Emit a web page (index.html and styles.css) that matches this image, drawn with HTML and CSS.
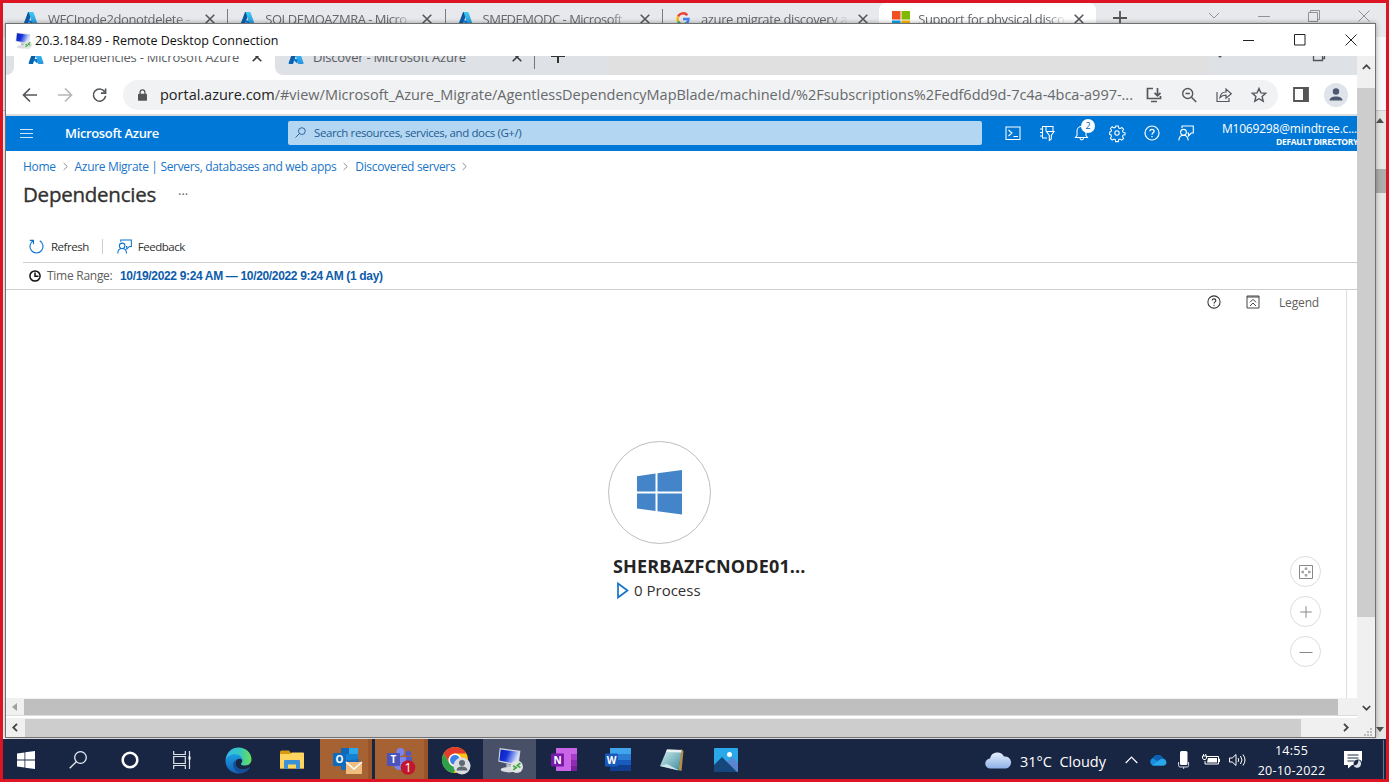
FILE: index.html
```html
<!DOCTYPE html>
<html lang="en">
<head>
<meta charset="utf-8">
<title>20.3.184.89 - Remote Desktop Connection</title>
<link rel="stylesheet" href="styles.css">
</head>
<body>
<svg class="defs" width="0" height="0">
  <defs>
    <linearGradient id="azL" x1="0" y1="0" x2="0" y2="1"><stop offset="0" stop-color="#114a8b"/><stop offset="1" stop-color="#0669bc"/></linearGradient>
    <linearGradient id="azR" x1="0" y1="0" x2="0" y2="1"><stop offset="0" stop-color="#3ccbf4"/><stop offset="1" stop-color="#2892df"/></linearGradient>
    <linearGradient id="edgeA" x1="0" y1="0" x2="1" y2="0"><stop offset="0" stop-color="#35b8f0"/><stop offset=".55" stop-color="#35c7c0"/><stop offset="1" stop-color="#6be054"/></linearGradient>
    <linearGradient id="edgeB" x1="0" y1="0" x2="0" y2="1"><stop offset="0" stop-color="#1b9de2"/><stop offset="1" stop-color="#1260b8"/></linearGradient>
    <linearGradient id="scr" x1="0" y1="0" x2="1" y2=".3"><stop offset="0" stop-color="#0a1ec0"/><stop offset=".45" stop-color="#1533d8"/><stop offset="1" stop-color="#d5e3fb"/></linearGradient>
    <linearGradient id="cloudG" x1="0" y1="0" x2="0" y2="1"><stop offset="0" stop-color="#e6f0fd"/><stop offset="1" stop-color="#8fb1e8"/></linearGradient>
    <linearGradient id="noteG" x1="0" y1="0" x2="1" y2="1"><stop offset="0" stop-color="#d8f2f3"/><stop offset="1" stop-color="#3b8b9c"/></linearGradient>
    <symbol id="azure" viewBox="0 0 16 16"><path d="M5.4 1h4.4L5 15H1.6Q.3 15 .7 13.700z" fill="url(#azL)"/><path d="M10.500 10H4.600l4.600 4.500z" fill="#0078d4"/><path d="M6 1h4.400q.7 0 1 .8l4.100 12q.3 1.200-.9 1.200h-4.300z" fill="url(#azR)"/></symbol>
    <symbol id="x" viewBox="0 0 10 10"><path d="M.7.7l8.600 8.600M9.300.7L.7 9.300" stroke="currentColor" stroke-width="1.600" fill="none"/></symbol>
    <symbol id="feedback" viewBox="0 0 16 16"><g fill="none" stroke="currentColor" stroke-width="1.100"><circle cx="5.500" cy="7.300" r="2.900"/><path d="M.8 15.500c.2-3.500 2-5.300 4.700-5.300s4.500 1.800 4.700 5.300M4 3V1h11.300v7h-2l-2.800 2.800V8H9.500"/></g></symbol>
    <symbol id="help" viewBox="0 0 16 16"><circle cx="8" cy="8" r="7" fill="none" stroke="currentColor" stroke-width="1.200"/><path d="M5.900 6.300c0-2.600 4.200-2.600 4.200 0C10.100 7.800 8 7.900 8 9.700M8 11v1.300" fill="none" stroke="currentColor" stroke-width="1.300"/></symbol>
    <symbol id="rdp" viewBox="0 0 26 26"><path d="M3.500 2l20 2.600-1.800 14.800L2.200 15z" fill="#cfd6e0"/><path d="M4.500 3.300l17.700 2.300-1.500 12L3.300 14z" fill="url(#scr)"/><path d="M10 17l6 1.300.5 3.700H10z" fill="#b8bcc4"/><ellipse cx="12.500" cy="22.800" rx="8" ry="2.600" fill="#d9dce1"/><circle cx="20" cy="20" r="6" fill="#e0e4e2"/><path d="M16.500 19l3 2-3 2M23.500 16.500l-3 2.300 3 2" stroke="#3ba53b" stroke-width="1.500" fill="none"/></symbol>
    <symbol id="sep" viewBox="0 0 6 10"><path d="M.8.800l4.300 4.200L.8 9.200" fill="none" stroke="#777" stroke-width="1"/></symbol>
  </defs>
</svg>

<main class="desktop">
  <section class="back-browser">
    <div class="back-tabs">
      <div class="btab"><svg class="az"><use href="#azure"/></svg><span class="tab-text t1">WFCInode2donotdelete - </span><svg class="tx"><use href="#x"/></svg></div>
      <div class="btab"><svg class="az"><use href="#azure"/></svg><span class="tab-text t2">SQLDEMOAZMRA - Micro</span><svg class="tx"><use href="#x"/></svg></div>
      <div class="btab"><svg class="az"><use href="#azure"/></svg><span class="tab-text t3">SMFDEMODC - Microsoft</span><svg class="tx"><use href="#x"/></svg></div>
      <div class="btab plain"><svg class="goog" viewBox="0 0 16 16"><g fill="none" stroke-width="2.800"><path d="M13 3.800A6.300 6.300 0 0 0 2.400 5.200" stroke="#ea4335"/><path d="M2.400 5.200a6.300 6.300 0 0 0 0 5.600" stroke="#fbbc05"/><path d="M2.400 10.800a6.300 6.300 0 0 0 9.800 1.800" stroke="#34a853"/><path d="M12.200 12.600A6 6 0 0 0 14.300 8H8" stroke="#4285f4"/></g></svg><span class="tab-text t4">azure migrate discovery a</span><svg class="tx"><use href="#x"/></svg></div>
      <div class="btab active"><svg class="ms" viewBox="0 0 18 18"><path fill="#f25022" d="M0 0h8.500v8.500H0z"/><path fill="#7fba00" d="M9.500 0H18v8.500H9.500z"/><path fill="#00a4ef" d="M0 9.500h8.500V18H0z"/><path fill="#ffb900" d="M9.500 9.500H18V18H9.500z"/></svg><span class="tab-text t5">Support for physical disco</span><svg class="tx"><use href="#x"/></svg></div>
      <svg class="back-plus" viewBox="0 0 14 14"><path d="M7 0v14M0 7h14" stroke="#555" stroke-width="1.800"/></svg>
      <div class="back-controls">
        <svg width="12" height="8" viewBox="0 0 12 8"><path d="M1 1l5 5 5-5" /></svg>
        <svg width="12" height="12" viewBox="0 0 12 12"><path d="M0 6.500h12"/></svg>
        <svg width="12" height="12" viewBox="0 0 12 12"><path d="M.5 2.500h9v9h-9zM2.500 2.500v-2h9v9h-2"/></svg>
        <svg width="12" height="12" viewBox="0 0 12 12"><path d="M.5.500l11 11M11.500.500l-11 11"/></svg>
      </div>
    </div>
    <div class="back-toolbar"></div>
    <div class="back-page">
      <div class="back-scroll"><svg class="up" viewBox="0 0 8 5"><path d="M0 5l4-5 4 5z"/></svg><i class="back-thumb"></i><svg class="down" viewBox="0 0 8 5"><path d="M0 0l4 5 4-5z"/></svg></div>
    </div>
  </section>

  <section class="window">
    <header class="titlebar">
      <svg class="rdp-small"><use href="#rdp"/></svg>
      <h1>20.3.184.89 - Remote Desktop Connection</h1>
      <div class="win-controls">
        <svg width="12" height="12" viewBox="0 0 12 12"><path d="M0 6.500h11"/></svg>
        <svg width="12" height="12" viewBox="0 0 12 12"><path d="M.5.500h10.500v10.500H.5z"/></svg>
        <svg width="12" height="12" viewBox="0 0 12 12"><path d="M.5.500l11 11M11.500.500l-11 11"/></svg>
      </div>
    </header>
    <div class="session">
      <div class="remote">
        <div class="rtabs">
          <div class="rtab-row">
            <span class="rtab-edge"></span>
            <div class="rtab on"><svg class="az"><use href="#azure"/></svg><span class="r1">Dependencies - Microsoft Azure</span><svg class="tx"><use href="#x"/></svg></div>
            <div class="rtab off"><svg class="az"><use href="#azure"/></svg><span class="r2">Discover - Microsoft Azure</span><svg class="tx"><use href="#x"/></svg></div>
            <div class="rnew"><svg width="14" height="14" viewBox="0 0 14 14"><path d="M7 0v14M0 7h14" stroke="#333" stroke-width="2"/></svg></div>
            <div class="rmid"></div>
            <div class="rend"><svg width="10" height="6" viewBox="0 0 10 6"><path d="M0 0l5 5 5-5"/></svg><svg width="12" height="12" viewBox="0 0 12 12"><path d="M.5 2.500h9v9h-9zM2.500 2.500v-2h9v9h-2"/></svg></div>
          </div>
        </div>
        <div class="address">
          <svg class="nav back" viewBox="0 0 16 16"><path d="M8 1.500L1.500 8 8 14.500M1.500 8H15"/></svg>
          <svg class="nav fwd" viewBox="0 0 16 16"><path d="M8 1.500L14.500 8 8 14.500M14.500 8H1"/></svg>
          <svg class="nav rel" viewBox="0 0 16 16"><path d="M13.500 4.500A6.500 6.500 0 1 0 14.500 9M14.500 1v5h-5"/></svg>
          <div class="omnibox">
            <svg class="lock" viewBox="0 0 10 13"><path d="M1 5h8q1 0 1 1v6q0 1-1 1H1q-1 0-1-1V6q0-1 1-1z" fill="#555"/><path d="M2.300 5.500V3.500a2.700 2.700 0 0 1 5.400 0v2" fill="none" stroke="#555" stroke-width="1.400"/></svg>
            <span class="url"><b>portal.azure.com</b>/#view/Microsoft_Azure_Migrate/AgentlessDependencyMapBlade/machineId/%2Fsubscriptions%2Fedf6dd9d-7c4a-4bca-a997-...</span>
            <div class="omni-icons">
              <svg viewBox="0 0 16 16"><path d="M7 1.500H1.500v10h13V9M5 14.500h6M11.500 1v7.500M8.500 5.800l3 3 3-3" stroke-width="1.700"/></svg>
              <svg viewBox="0 0 16 16"><circle cx="6.700" cy="6.500" r="5"/><path d="M4.500 6.500h4.400M10.500 10.300l4.700 4.700" stroke-width="1.600"/></svg>
              <svg viewBox="0 0 16 16"><path d="M1 5v9.500h12V11M4 10.500c.5-4 3-5.500 6-5.500V2l5.300 4.700-5.300 4.600V8.200C7.500 8.200 5.500 8.700 4 10.500z" stroke-width="1.200"/></svg>
              <svg viewBox="0 0 16 16"><path d="M8 1.500l1.900 4.400 4.800.4-3.600 3.200 1.100 4.700L8 11.700l-4.200 2.500 1.100-4.700L1.300 6.300l4.800-.4z"/></svg>
            </div>
          </div>
          <svg class="panel" viewBox="0 0 16 15"><path d="M1 1h14v13H1z" fill="none" stroke="#555" stroke-width="1.800"/><path d="M10 1h5v13h-5z" fill="#555"/></svg>
          <svg class="avatar" viewBox="0 0 24 24"><circle cx="12" cy="12" r="12" fill="#dfe3ea"/><circle cx="12" cy="8.500" r="3.200" fill="#4d5870"/><path d="M5.500 17.500c0-5.500 13-5.500 13 0z" fill="#4d5870"/></svg>
        </div>
        <div class="azure-bar">
          <svg class="burger" viewBox="0 0 13 9"><path d="M0 .5h13M0 4.500h13M0 8.500h13" stroke="#cfe6fa"/></svg>
          <strong>Microsoft Azure</strong>
          <div class="search"><svg viewBox="0 0 12 12"><circle cx="7.500" cy="4.500" r="3.700"/><path d="M4.800 7.200L.5 11.500"/></svg><span>Search resources, services, and docs (G+/)</span></div>
          <div class="az-icons">
            <svg viewBox="0 0 16 16"><path d="M1 2h14v12.500H1zM3.500 5l3.500 3-3.500 3M8.500 11.500H13"/></svg>
            <svg viewBox="0 0 16 16"><path d="M14 6V1.500H3.500V13H8M1 4h2.500M1 7.500h2.500M1 11h2.500M7 1.500V6M7.500 6.500H15l-2.700 4V14l-2 1.500v-5z"/></svg>
            <span class="bell"><svg viewBox="0 0 16 16"><path d="M1.500 12.500h12l-1.500-2V6a4.500 4.500 0 0 0-9 0v4.500zM6 13c0 2.500 3.500 2.500 3.500 0"/></svg><em>2</em></span>
            <svg viewBox="0 0 16 16"><circle cx="8" cy="8" r="2.200"/><path d="M6.700 1h2.600l.4 2 1.300.6 1.800-1.100 1.800 1.800-1.100 1.800.6 1.300 1.900.4v1.900l-2 .4-.5 1.400 1.100 1.800-1.800 1.800-1.800-1.100-1.300.6-.4 2H6.700l-.4-2-1.300-.6-1.800 1.100-1.800-1.800 1.100-1.800L2 9.800l-1.300-.3V7l1.300-.5.5-1.200-1.100-1.800 1.800-1.800L5 2.900l1.300-.6z"/></svg>
            <svg><use href="#help"/></svg>
            <svg><use href="#feedback"/></svg>
          </div>
          <div class="account"><span>M1069298@mindtree.c...</span><small>DEFAULT DIRECTORY</small></div>
        </div>
        <nav class="crumbs"><a class="c1">Home</a><svg><use href="#sep"/></svg><a class="c2">Azure Migrate | Servers, databases and web apps</a><svg><use href="#sep"/></svg><a class="c3">Discovered servers</a><svg><use href="#sep"/></svg></nav>
        <div class="heading"><h2>Dependencies</h2><span>···</span></div>
        <div class="commands">
          <svg class="refresh" viewBox="0 0 16 16"><path d="M4.500 1.900A7 7 0 1 0 11.500 1.900M.8 1.500h4v4" fill="none" stroke="#0a72cf" stroke-width="1.200"/></svg><span class="k1">Refresh</span>
          <i></i>
          <svg class="fb"><use href="#feedback"/></svg><span class="k2">Feedback</span>
        </div>
        <div class="range"><svg viewBox="0 0 12 12"><circle cx="6" cy="6" r="5.100"/><path d="M6 2.500V6.300h3.500"/></svg><span>Time Range:</span><b>10/19/2022 9:24 AM — 10/20/2022 9:24 AM (1 day)</b></div>
        <div class="canvas">
          <div class="map">
            <div class="legend"><svg class="lh"><use href="#help"/></svg><svg class="lc" viewBox="0 0 14 14"><path d="M1 1h12v12H1zM1 2h12M4 7.300l3-3 3 3M4 11l3-3 3 3"/></svg><span>Legend</span></div>
            <div class="node">
              <div class="disc"><svg viewBox="0 0 45 45"><g fill="#4484c8"><path d="M0 6.300l18.500-2.800v18H0z"/><path d="M20.500 3.200L45 0v21.500H20.500z"/><path d="M0 23.500h18.500V41L0 38.500z"/><path d="M20.500 23.500H45V44.500L20.500 41.300z"/></g></svg></div>
              <h3>SHERBAZFCNODE01...</h3>
              <p><svg viewBox="0 0 12 17"><path d="M1 1.500v14l9.500-7z" fill="none" stroke="#1673c7" stroke-width="1.700"/></svg><span>0 Process</span></p>
            </div>
            <div class="zoomers">
              <button><svg viewBox="0 0 14 14"><path d="M.5.500h13v13H.5zM7 2v3M7 9v3M2 7h3M9 7h3M4 5.500v3M10 5.500v3M5.500 4h3M5.500 10h3"/></svg></button>
              <button><svg viewBox="0 0 14 14"><path d="M7 1.200v11.600M1.200 7h11.600"/></svg></button>
              <button><svg viewBox="0 0 14 14"><path d="M.5 7.500h13"/></svg></button>
            </div>
          </div>
        </div>
        <div class="hscroll inner"><svg width="5" height="8" viewBox="0 0 5 8"><path d="M5 0v8L0 4z" fill="#a0a0a0"/></svg><i></i></div>
      </div>
      <div class="vscroll"><svg viewBox="0 0 9 6"><path d="M.8 5L4.500 1.300 8.200 5"/></svg><i></i><svg viewBox="0 0 9 6"><path d="M.8 1l3.700 3.700L8.200 1"/></svg></div>
    </div>
    <div class="hscroll outer"><svg width="6" height="9" viewBox="0 0 6 9"><path d="M5 .8L1.300 4.500 5 8.200"/></svg><i></i><svg width="6" height="9" viewBox="0 0 6 9"><path d="M1 .8l3.700 3.700L1 8.200"/></svg><svg class="grip" width="9" height="8" viewBox="0 0 9 8"><path d="M6 0h2v2H6zM3 3h2v2H3zM6 3h2v2H6zM0 6h2v2H0zM3 6h2v2H3zM6 6h2v2H6z"/></svg></div>
  </section>

  <footer class="taskbar">
    <div class="cell w1"><svg width="18" height="18" viewBox="0 0 18 18"><path fill="#fff" d="M0 2.500L7.500 1.400v7.200H0zM8.300 1.300L18 0v8.600H8.300zM0 9.400h7.500v7.200L0 15.500zM8.300 9.400H18V18l-9.700-1.300z"/></svg></div>
    <div class="cell w2"><svg width="18" height="18" viewBox="0 0 18 18"><g fill="none" stroke="#e8ecf3" stroke-width="1.300"><circle cx="11.500" cy="6.500" r="5.800"/><path d="M7.300 10.700L.7 17.300"/></g></svg></div>
    <div class="cell w2"><svg width="18" height="18" viewBox="0 0 18 18"><circle cx="9" cy="9" r="7.300" fill="none" stroke="#fff" stroke-width="2.500"/></svg></div>
    <div class="cell w2"><svg width="18" height="18" viewBox="0 0 18 18"><path d="M.7 0v3.500h11.600V0M.7 5.500h11.600v7H.7zM.7 18v-3.500h11.600V18M16.500 0v18" fill="none" stroke="#dfe3ea" stroke-width="1.200"/><path d="M15.500 5.500h2v3h-2z" fill="#fff"/></svg></div>
    <div class="cell w3"><svg width="27" height="27" viewBox="0 0 27 27"><path d="M.5 13C1.500 5 7 .5 13.500.5 21 .5 26.500 6 26.500 12.300c0 4-3 6.300-6.500 6.300-2.500 0-4-.6-4-1.600s1.300-1.400 1.300-3.600C17.300 9.500 8 5.500 .5 13z" fill="url(#edgeA)"/><path d="M.5 13C3 8 8 6.700 12 7.500c3.500.7 5.400 3.300 5.300 5.700-1-2-6-2.500-6.800 2C9.500 21 16 24 22.500 22.700 20 25.500 17 26.500 13.500 26.500 6 26.500 0 20.500.5 13z" fill="url(#edgeB)"/><path d="M10.500 15.200C9.500 21 17 24.500 24 20.500c.8-.4 1.200.2.800.8C20 28 11 27 8.500 20c-1-3 0-5.500 2-6.800z" fill="#164e96"/></svg></div>
    <div class="cell w3"><svg width="24" height="20" viewBox="0 0 24 20"><path d="M0 2q0-1.500 1.500-1.500H9L11 3h12q1 0 1 1v14.500H0z" fill="#d99a10"/><path d="M0 4h10l2-1.500h11q1 0 1 1v15H0z" fill="#ffd55f"/><path d="M4 19v-8q0-1 1-1h14q1 0 1 1v8h-4v-4.500H8V19z" fill="#3b91d5"/></svg></div>
    <div class="cell alert o"><svg width="30" height="28" viewBox="0 0 30 28"><path d="M8 1h17v7H8z" fill="#1067b5"/><path d="M16 1h9v6h-9z" fill="#2ba7ea"/><path d="M8 7h17v7H8z" fill="#1481d2"/><path d="M8 14l18-2v11H8z" fill="#1b6bb8"/><path d="M0 6h13v13H0z" fill="#0f6bbd"/><text x="6.500" y="16.200" font-size="10" font-weight="700" fill="#fff" text-anchor="middle">O</text><path d="M13 15h16v12H13z" fill="#efbd7f"/><path d="M13 15l8 7 8-7" fill="none" stroke="#fff" stroke-width="1.400"/></svg></div>
    <div class="cell alert t"><svg width="28" height="28" viewBox="0 0 28 28"><circle cx="13.500" cy="5" r="4" fill="#7b83eb"/><circle cx="21.500" cy="6.500" r="2.700" fill="#5059c9"/><path d="M7 10h12v7q0 6-6 6t-6-6z" fill="#7b83eb"/><path d="M19 10h6v7h-6z" fill="#5059c9"/><rect y="6" width="13" height="13" rx="1" fill="#4b53bc"/><text x="6.500" y="16.200" font-size="10" font-weight="700" fill="#fff" text-anchor="middle">T</text><circle cx="21" cy="20.500" r="7.300" fill="#c4152f"/><text x="21" y="25" font-size="12.500" fill="#fff" text-anchor="middle">1</text></svg></div>
    <div class="cell c"><svg width="29" height="29" viewBox="0 0 29 29"><circle cx="13" cy="14" r="13" fill="#fbc116"/><path d="M1.700 7.500A13 13 0 0 1 24.300 7.500H13a6.500 6.500 0 0 0-5.600 9.700z" fill="#e33b2e"/><path d="M1.700 7.500L7.400 17.200A6.500 6.500 0 0 0 15 20.200L11.500 27A13 13 0 0 1 1.700 7.500z" fill="#2da04c"/><circle cx="13" cy="14" r="6.500" fill="#fff"/><circle cx="13" cy="14" r="5" fill="#3f7fe8"/><circle cx="20" cy="20" r="8.500" fill="#d9dde2"/><circle cx="20" cy="17" r="3" fill="#5f6873"/><path d="M14.500 24.500c0-5.500 11-5.500 11 0z" fill="#5f6873"/></svg></div>
    <div class="cell r"><svg width="27" height="27"><use href="#rdp"/></svg></div>
    <div class="cell w3"><svg width="26" height="24" viewBox="0 0 26 24"><path d="M5 0h21v23H5z" fill="#c965e6"/><path d="M20 6h6v6h-6z" fill="#a93bc9"/><path d="M20 12h6v5.500h-6z" fill="#8f2bb3"/><path d="M20 17.500h6V23h-6z" fill="#76209a"/><rect y="5.500" width="13" height="13" rx="1" fill="#7719aa"/><text x="6.500" y="15.700" font-size="10" font-weight="700" fill="#fff" text-anchor="middle">N</text></svg></div>
    <div class="cell w3"><svg width="26" height="24" viewBox="0 0 26 24"><path d="M5 0h21v6H5z" fill="#41a5ee"/><path d="M5 6h21v6H5z" fill="#2b7cd3"/><path d="M5 12h21v5.500H5z" fill="#185abd"/><path d="M5 17.500h21V23H5z" fill="#103f91"/><rect y="5.500" width="13" height="13" rx="1" fill="#185abd"/><text x="6.500" y="15.700" font-size="10" font-weight="700" fill="#fff" text-anchor="middle">W</text></svg></div>
    <div class="cell w3"><svg width="25" height="24" viewBox="0 0 25 24"><path d="M22 1l2.500 2-2 20-3-1z" fill="#b88d45"/><path d="M8 1.500L22.500 2l-3 20.500L1 18z" fill="url(#noteG)"/><path d="M8 1.500L22.500 2l-.4 2.500L7 4z" fill="#e8f0f0"/><path d="M1 18l7-2 12 6.500z" fill="#cfe6e8"/></svg></div>
    <div class="cell w3"><svg width="24" height="24" viewBox="0 0 24 24"><rect width="24" height="24" rx="1" fill="#2aa9ea"/><path d="M10 17l8-8 6 6v9H10z" fill="#5a86cf"/><path d="M0 17l8-8 15 15H0z" fill="#15477d"/><circle cx="15.500" cy="6.500" r="2.500" fill="#fff"/></svg></div>
    <div class="tray">
      <svg class="cloud" viewBox="0 0 27 18"><path d="M5.500 17.500a5 5 0 0 1-.5-10A7.500 7.500 0 0 1 19 5.500a6 6 0 0 1 2 12z" fill="url(#cloudG)"/></svg>
      <span class="temp">31°C&nbsp; Cloudy</span>
      <svg class="chev" viewBox="0 0 13 8"><path d="M.7 7l5.800-6 5.800 6" fill="none" stroke="#fff" stroke-width="1.200"/></svg>
      <svg class="od" viewBox="0 0 18 12"><path d="M4 11.500a4 4 0 0 1-.3-7.500A5.800 5.800 0 0 1 14 4.500a3.600 3.600 0 0 1 .5 7z" fill="#1490df"/><path d="M3.700 4A5.800 5.800 0 0 1 14 4.500L8 7z" fill="#0f5fb0"/><path d="M3 11.300L12 5q5 0 5.500 3.500-.3 3-3 3H4z" fill="#28a8ea"/></svg>
      <svg class="mic" viewBox="0 0 11 18"><rect x="2" width="7.500" height="14" rx="1.500" fill="#fff"/><path d="M.6 11v3.500q0 1.500 1.500 1.500h7q1.500 0 1.500-1.500V11M5.700 16v2" fill="none" stroke="#dde" stroke-width="1"/></svg>
      <svg class="bat" viewBox="0 0 18 12"><path d="M5 2.500h11.500V10H3V7M16.500 5h1v3" fill="none" stroke="#fff"/><path d="M6 4h9v4.500H5z" fill="#fff"/><path d="M.5 2h4v2L3.500 5.500h-2L.5 4zM1.500 0v2M3.800 0v2" fill="none" stroke="#fff"/></svg>
      <svg class="spk" viewBox="0 0 17 14"><path d="M.5 5h2.700L7 1.500v11L3.200 9H.5zM9 5q1.500 2 0 4M11.500 3q3 4 0 8M14 1.500q4 5.500 0 11" fill="none" stroke="#fff"/></svg>
      <div class="clock"><span>14:55</span><span>20-10-2022</span></div>
      <svg class="notif" viewBox="0 0 19 18"><path d="M0 0h18v14H8l-4 3.500V14H0z" fill="#fff"/><path d="M3.500 4h11M3.500 7h11M3.500 10h7" stroke="#1b2845"/><circle cx="14" cy="13" r="4.500" fill="#1b2845"/><path d="M14.500 9a4 4 0 1 1-5 5.500q5 0 5-5.500z" fill="#dce2ec"/></svg>
      <i class="edge"></i>
    </div>
  </footer>
</main>
</body>
</html>
```

FILE: styles.css
```css
* { box-sizing: border-box; }
html, body { margin: 0; height: 100%; overflow: hidden; }
body { font-family: "Open Sans", "Noto Sans", sans-serif; color: #323130; }
svg { display: block; flex: none; overflow: visible; }
h1, h2, h3, p { margin: 0; font-weight: 400; }
span, b, strong, a, small, h1, h2, h3 { white-space: nowrap; }
i, em { font-style: normal; flex: none; }
.defs { position: absolute; }
.desktop { position: relative; width: 1389px; height: 782px; border: 3px solid #dc1424; background: #fff; display: flex; flex-direction: column; overflow: hidden; }

/* browser behind the session window */
.back-browser { height: 736px; flex: none; display: flex; flex-direction: column; }
.back-tabs { height: 34px; flex: none; display: flex; background: #e8e9ec; padding-left: 7px; }
.btab { width: 217.300px; height: 31px; flex: none; display: flex; align-items: center; padding-left: 13px; position: relative; color: #66696d; }
.btab:not(.active):not(.plain)::after { content: ""; position: absolute; right: -1px; top: 6px; width: 1px; height: 16px; background: #7b7d80; }
.btab .az { width: 15px; height: 15px; margin-right: 10px; }
.goog { width: 14px; height: 14px; margin-right: 11px; margin-left: 1px; }
.ms { width: 18px; height: 18px; margin-right: 8px; margin-top: 3px; }
.tab-text { width: 148px; flex: none; font-size: 13px; -webkit-mask-image: linear-gradient(90deg, #000 86%, transparent); mask-image: linear-gradient(90deg, #000 86%, transparent); }
.t1 { letter-spacing: -.4px; }
.t2 { letter-spacing: -.5px; }
.t3 { letter-spacing: -.5px; }
.t4 { letter-spacing: -.35px; }
.t5 { letter-spacing: -.4px; }
.tx { width: 10px; height: 10px; color: #55585c; margin-left: 9px; }
.btab.active { background: #fff; border-radius: 7px 7px 0 0; }
.btab.active .tx { margin-left: 8px; }
.back-plus { width: 14px; height: 14px; margin: 8px 0 0 17px; }
.back-controls { margin-left: auto; display: flex; gap: 38px; align-items: center; height: 25px; padding-right: 16px; }
.back-controls path { fill: none; stroke: #909296; }
.back-toolbar { height: 74px; flex: none; background: #f8f9fa; border-bottom: 1px solid #ccc; }
.back-page { flex: 1; display: flex; justify-content: flex-end; }
.back-scroll { width: 14px; display: flex; flex-direction: column; align-items: flex-end; background: #e6e6e6; padding: 7px 0 7px; }
.back-scroll svg { width: 8px; height: 5px; margin-right: 2px; fill: #505050; }
.back-thumb { width: 14px; height: 24px; background: #adadad; margin: 46px 0 auto; }

/* remote desktop window */
.window { position: absolute; left: 2px; top: 20px; width: 1371px; height: 715px; border: 1px solid #717171; background: #fff; display: flex; flex-direction: column; box-shadow: 0 0 5px rgba(0,0,0,.35); }
.titlebar { height: 32px; flex: none; display: flex; align-items: center; padding: 0 18px 0 8px; }
.rdp-small { width: 18px; height: 18px; margin: -1px 3px 0 0; }
.titlebar h1 { font-size: 12.500px; color: #111; letter-spacing: -.02px; }
.win-controls { margin-left: auto; display: flex; gap: 39px; }
.win-controls path { fill: none; stroke: #222; }
.session { display: flex; height: 662px; flex: none; }
.remote { width: 1351px; flex: none; display: flex; flex-direction: column; }

.rtabs { height: 19px; flex: none; overflow: hidden; background: #fff; }
.rtab-row { height: 36px; margin-top: -17px; display: flex; }
.rtab-row > * { flex: none; display: flex; align-items: center; }
.rtab-edge { width: 8px; background: #dee1e6; border-radius: 0 0 8px 0; }
.rtab { font-size: 13px; color: #5b5e62; }
.rtab .az { width: 16px; height: 16px; margin-right: 9px; }
.rtab .tx { margin-left: 0; color: #3a3d40; }
.rtab.on { width: 261px; padding: 0 13px 1px 14px; }
.rtab.off { width: 259px; background: #dee1e6; border-radius: 0 0 0 8px; padding: 0 12px 1px 13px; }
.rtab span { width: 199px; letter-spacing: -.22px; }
.rnew { width: 74px; background: linear-gradient(#73767a, #73767a) 0 12px / 1px 18px no-repeat #dee1e6; padding: 0 0 2px 17px; }
.rmid { width: 601px; background: #e0e0e1; }
.rtab-row .rend { flex: 1; background: #dee1e6; padding: 0 32px 5px 6px; justify-content: space-between; }
.rend path { fill: none; stroke: #555; stroke-width: 1.300; }

.address { height: 41px; flex: none; display: flex; align-items: center; padding-left: 16px; border-bottom: 2px solid #dcdcdc; }
.nav { width: 16px; height: 16px; margin-right: 19px; fill: none; stroke: #54575b; stroke-width: 1.700; }
.nav.fwd { stroke: #b5b6b8; }
.nav.rel { margin-right: 16px; width: 15px; }
.omnibox { width: 1155px; height: 30px; border-radius: 15px; background: #f1f2f3; display: flex; align-items: center; padding-left: 15px; flex: none; }
.lock { width: 9px; height: 12px; margin-right: 13px; }
.url { width: 986px; font-size: 14.500px; color: #66696c; letter-spacing: -.015px; }
.url b { font-weight: 400; color: #222; }
.omni-icons { display: flex; gap: 19px; }
.omni-icons svg { width: 16px; height: 16px; fill: none; stroke: #55585c; stroke-width: 1.400; }
.panel { width: 16px; height: 15px; margin: 0 15px; }
.avatar { width: 24px; height: 24px; }

.azure-bar { height: 35px; flex: none; background: #0078d7; color: #fff; display: flex; align-items: center; padding: 0 0 1px 14px; overflow: hidden; }
.burger { width: 13px; height: 9px; margin-right: 32px; }
.azure-bar strong { width: 223px; font-size: 13px; font-weight: 600; letter-spacing: -.35px; }
.search { width: 694px; height: 24px; border-radius: 2px; background: #b3d6f3; color: #245d91; display: flex; align-items: center; padding: 0 0 1px 7px; font-size: 11.500px; letter-spacing: -.4px; flex: none; }
.search svg { width: 11px; height: 11px; margin-right: 8px; fill: none; stroke: #245d91; }
.az-icons { display: flex; gap: 18.800px; margin-left: 22.500px; align-items: center; }
.az-icons svg { width: 16px; height: 16px; fill: none; stroke: #fff; stroke-width: 1.050; }
.bell { position: relative; }
.bell em { position: absolute; left: 7px; top: -6px; width: 14px; height: 14px; border-radius: 50%; background: #fff; color: #0065b8; font-size: 9px; line-height: 14px; text-align: center; }
.account { margin-left: auto; display: flex; flex-direction: column; align-items: flex-end; margin-top: 1px; flex: none; }
.account span { font-size: 12px; line-height: 15px; letter-spacing: -.2px; }
.account small { font-size: 8.500px; font-weight: 700; line-height: 11px; letter-spacing: -.32px; margin-right: -1px; }

.crumbs { height: 31px; flex: none; display: flex; align-items: center; padding-left: 17px; font-size: 12px; color: #1a75c9; letter-spacing: -.33px; }
.crumbs svg { width: 5px; height: 9px; margin: 0 7px; }
.heading { height: 26px; flex: none; display: flex; align-items: center; padding: 0 0 2px 17px; }
.heading h2 { font-size: 20.500px; width: 155px; letter-spacing: -.25px; -webkit-text-stroke: .35px #323130; }
.heading span { font-size: 13px; color: #666; }
.commands { height: 55px; flex: none; margin-left: 17px; display: flex; align-items: center; padding: 22px 0 0 6px; border-bottom: 1px solid #cfcfcf; font-size: 11.500px; letter-spacing: -.48px; }
.commands svg { width: 15px; height: 15px; margin-right: 6px; color: #0a72cf; }
.commands .refresh { margin-right: 7px; }
.commands i { width: 1px; height: 15px; background: #ccc; margin: 0 14px 0 13px; }
.range { height: 27px; flex: none; display: flex; align-items: center; padding: 0 0 1px 23px; border-bottom: 1px solid #cfcfcf; font-size: 12px; color: #605e5c; letter-spacing: -.27px; }
.range svg { width: 12px; height: 12px; margin: 1px 6px 0 0; fill: none; stroke: #111; stroke-width: 1.500; }
.range span { width: 73px; }
.range b { font-family: "Liberation Sans", Arial, sans-serif; color: #0c5cac; font-size: 12px; letter-spacing: -.34px; }
.canvas { height: 408px; flex: none; padding-right: 10px; }
.map { position: relative; height: 100%; border-right: 1px solid #dedede; }
.legend { display: flex; align-items: center; height: 24px; padding-left: 1201px; font-size: 12px; color: #605e5c; letter-spacing: -.15px; }
.legend svg { width: 14px; height: 14px; color: #333; margin-right: 25px; }
.legend .lc { margin-right: 19px; fill: none; stroke: #444; stroke-width: 1; }
.node { position: absolute; left: 602px; top: 151px; }
.disc { width: 103px; height: 103px; border: 1px solid #bdbdbd; border-radius: 50%; display: flex; align-items: center; justify-content: center; }
.disc svg { width: 45px; height: 45px; }
.node h3 { font-size: 18px; font-weight: 700; line-height: 24px; margin: 10px 0 0 5px; color: #252423; letter-spacing: .13px; }
.node p { display: flex; align-items: center; font-size: 15px; line-height: 24px; margin-left: 9px; }
.node p svg { width: 12px; height: 17px; margin-right: 5px; }
.zoomers { position: absolute; right: 25px; top: 266px; display: flex; flex-direction: column; gap: 9px; }
.zoomers button { width: 31px; height: 31px; border: 1px solid #ddd; border-radius: 50%; background: #fff; padding: 0; display: flex; align-items: center; justify-content: center; }
.zoomers svg { width: 14px; height: 14px; fill: none; stroke: #888; }

.hscroll { display: flex; align-items: center; background: #f0f0f0; }
.hscroll.inner { height: 18px; flex: none; padding-left: 6px; border-bottom: 1px solid #ddd; }
.hscroll.inner i { width: 1314px; height: 16px; background: #bfbfbf; margin-left: 7px; }
.hscroll.outer { height: 19px; flex: none; padding-left: 6px; }
.hscroll.outer i { width: 1276px; height: 18px; background: #cdcdcd; margin: 0 42px 0 7px; }
.hscroll.outer path { fill: none; stroke: #444; stroke-width: 1.800; }
.hscroll.outer .grip { margin: 8px 0 0 15px; }
.hscroll.outer .grip path { fill: #bbb; stroke: none; }
.vscroll { width: 18px; background: #f0f0f0; display: flex; flex-direction: column; align-items: center; padding: 8px 0 7px; }
.vscroll svg { width: 9px; height: 6px; fill: none; stroke: #444; stroke-width: 1.700; }
.vscroll i { width: 18px; height: 529px; background: #cdcdcd; margin: 18px 0 auto; }

/* taskbar */
.taskbar { height: 40px; flex: none; background: #182543; display: flex; position: relative; padding-top: 2px; }
.cell { flex: none; display: flex; align-items: center; justify-content: center; }
.cell.w1 { width: 49px; padding-right: 3px; }
.cell.w2 { width: 52px; }
.cell.w3 { width: 54px; }
.cell.w2 + .w3 { margin-left: 3px; }
.cell.alert { background: #a66233; width: 52px; margin-top: -2px; padding-top: 4px; border-right: 4px solid #98552a; }
.cell.o { padding-left: 8px; margin-left: 1px; }
.cell.t { margin-left: 3px; width: 53px; padding-left: 3px; }
.cell.c { width: 55px; padding-left: 1px; }
.cell.r { width: 53px; background: #475067; margin-top: -2px; }
.cell.r ~ .w3 { padding-left: 1px; }
.cell text { font-family: "Open Sans", sans-serif; }
.tray { margin-left: auto; display: flex; align-items: center; color: #fff; }
.cloud { width: 27px; height: 18px; margin-right: 8px; }
.temp { width: 105px; font-size: 14.500px; padding-top: 3px; }
.chev { width: 13px; height: 8px; margin-right: 11px; }
.od { width: 18px; height: 12px; margin-right: 11px; }
.mic { width: 11px; height: 18px; margin-right: 13px; }
.bat { width: 18px; height: 12px; margin-right: 9px; }
.spk { width: 17px; height: 14px; }
.clock { width: 91px; display: flex; flex-direction: column; align-items: center; font-size: 12.500px; line-height: 20.500px; padding-top: 2px; letter-spacing: .25px; }
.notif { width: 19px; height: 18px; margin: 0 20px 0 7px; }
.edge { width: 1px; height: 40px; margin-right: 2px; background: #6b7489; }
```
